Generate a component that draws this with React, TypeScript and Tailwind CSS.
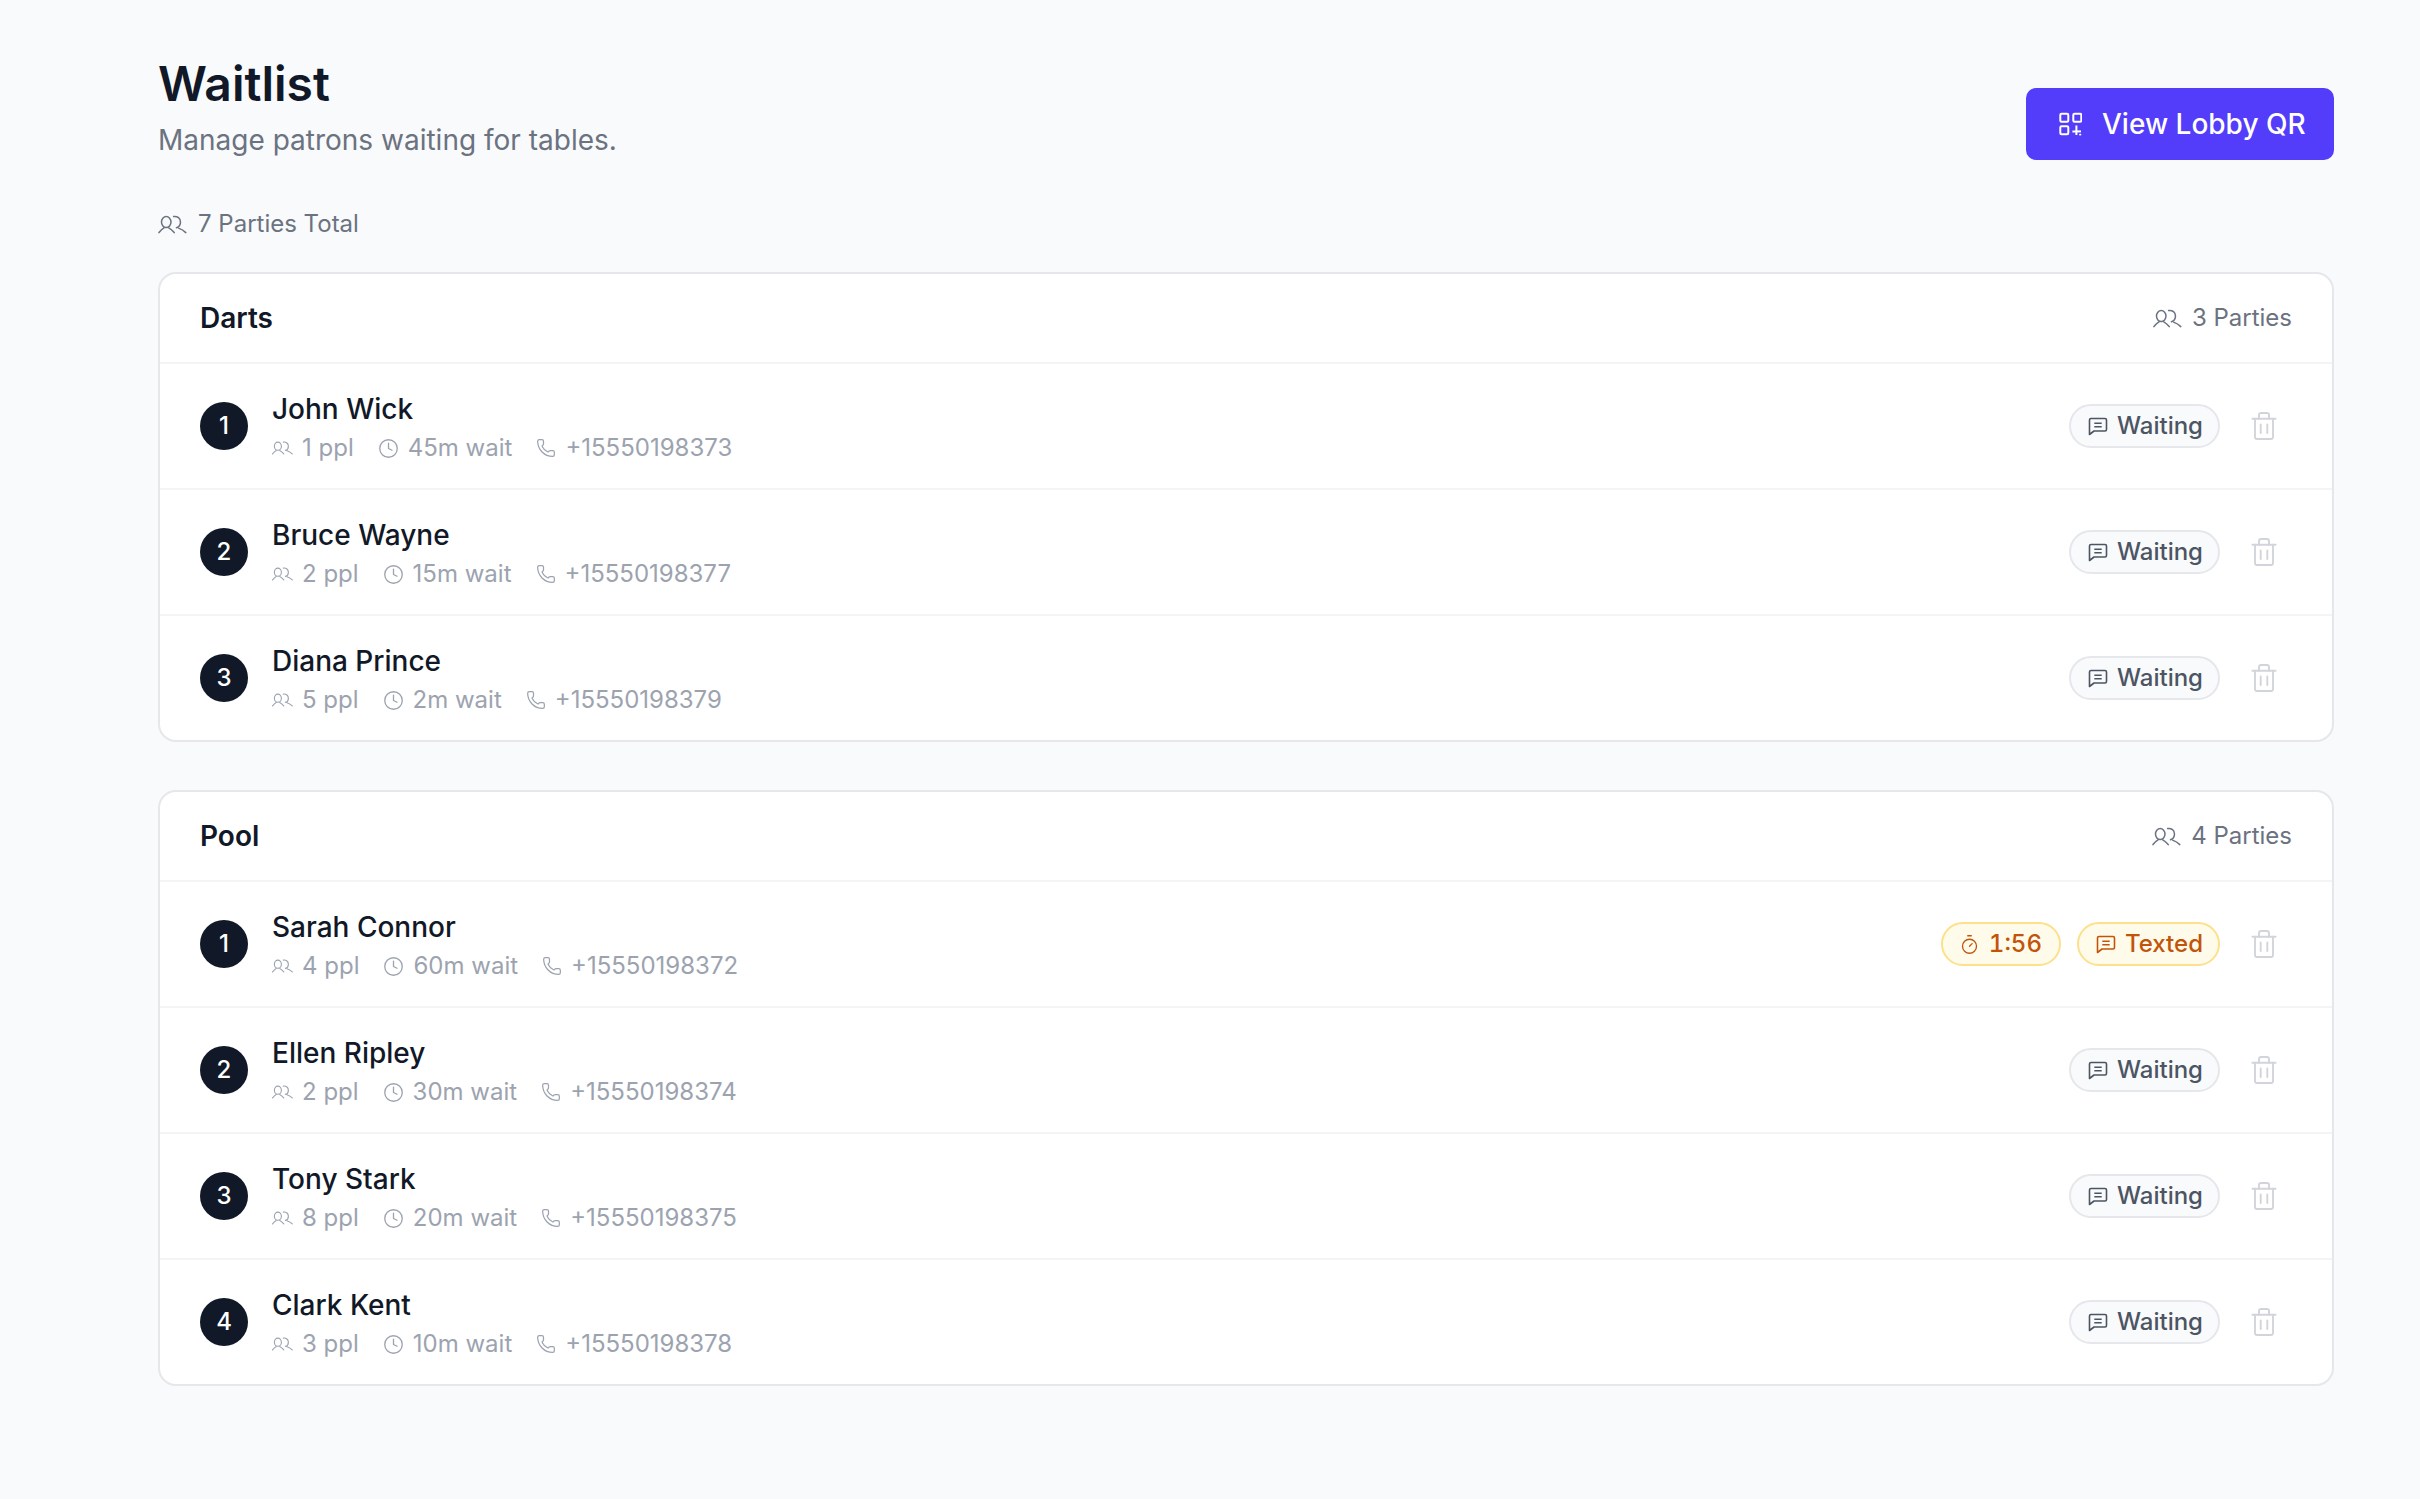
import { Clock, Phone, Timer } from "lucide-react";

type Party = {
  name: string;
  size: number;
  wait: string;
  phone: string;
  timer?: string;
};

const groups: { name: string; parties: Party[] }[] = [
  {
    name: "Darts",
    parties: [
      { name: "John Wick", size: 1, wait: "45m", phone: "+15550198373" },
      { name: "Bruce Wayne", size: 2, wait: "15m", phone: "+15550198377" },
      { name: "Diana Prince", size: 5, wait: "2m", phone: "+15550198379" },
    ],
  },
  {
    name: "Pool",
    parties: [
      { name: "Sarah Connor", size: 4, wait: "60m", phone: "+15550198372", timer: "1:56" },
      { name: "Ellen Ripley", size: 2, wait: "30m", phone: "+15550198374" },
      { name: "Tony Stark", size: 8, wait: "20m", phone: "+15550198375" },
      { name: "Clark Kent", size: 3, wait: "10m", phone: "+15550198378" },
    ],
  },
];

function UsersIcon({ className }: { className: string }) {
  return (
    <svg viewBox="4 6 30 20" fill="none" stroke="currentColor" strokeWidth="1.6" strokeLinecap="round" className={className}>
      <ellipse cx="12.4" cy="13.4" rx="5" ry="5.8" />
      <path d="M4.8 24.5C6.5 22.4 8.4 20.6 10 19.6" />
      <path d="M15 19.6C17 20.6 19 22.4 20.8 24.5" />
      <path d="M20.2 7.6C24.2 7 27.4 9.6 27.4 13.4C27.4 16.4 25.6 18.8 23.2 19.4" />
      <path d="M25.4 19.8C28 20.8 31 22.6 33 24.5" />
    </svg>
  );
}

function QrIcon() {
  return (
    <svg viewBox="8 5 24 26" fill="none" stroke="currentColor" strokeWidth="2" className="h-[26px] w-[24px]">
      <rect x="10.3" y="7.7" width="8" height="8" rx="1.2" />
      <rect x="23.3" y="7.7" width="8" height="8" rx="1.2" />
      <rect x="10.3" y="20.3" width="8" height="8" rx="1.2" />
      <path d="M22.4 25.4H26.4V19.6" />
      <path d="M26.4 25.4V29" />
      <path d="M26.4 25.4H31" />
      <path d="M30.2 27.8V29.4" />
    </svg>
  );
}

function MessageIcon() {
  return (
    <svg viewBox="7 6 20 19" fill="none" stroke="currentColor" strokeWidth="1.6" strokeLinejoin="round" className="h-[19px] w-[20px]">
      <path d="M10 7.5H24A1.5 1.5 0 0 1 25.5 9V18.5A1.5 1.5 0 0 1 24 20H13L8.5 23.5V9A1.5 1.5 0 0 1 10 7.5Z" />
      <path d="M13.3 12.3H20.7M13.3 15.7H20.7" />
    </svg>
  );
}

function TrashIcon() {
  return (
    <svg viewBox="5 4 30 32" fill="none" stroke="currentColor" strokeWidth="1.9" strokeLinecap="round" className="h-[32px] w-[30px]">
      <path d="M8.4 12.7H31.6" />
      <path d="M15 12.7V9A2 2 0 0 1 17 7H23A2 2 0 0 1 25 9V12.7" />
      <path d="M11 12.7V31A2 2 0 0 0 13 33H27A2 2 0 0 0 29 31V12.7" />
      <path d="M16.7 18.5V27M23.3 18.5V27" />
    </svg>
  );
}

function PartyRow({ party, position }: { party: Party; position: number }) {
  const texted = Boolean(party.timer);
  return (
    <div className="flex h-[126px] items-center justify-between border-t-2 border-[#f3f4f6] px-10">
      <div className="flex items-center gap-6">
        <div className="flex h-12 w-12 items-center justify-center rounded-full bg-[#111827] text-[24px] font-medium text-white">
          {position}
        </div>
        <div className="pt-1">
          <div className="text-[28px] leading-[39px] font-medium text-[#111827]">{party.name}</div>
          <div className="mt-[1px] flex items-center gap-6 text-[24px] leading-[36px] text-[#9ca3af]">
            <span className="flex items-center gap-[9px]">
              <UsersIcon className="h-[14px] w-[21px]" />
              {party.size} ppl
            </span>
            <span className="flex items-center gap-[9px]">
              <Clock className="h-[21px] w-[21px]" strokeWidth={1.5} />
              {party.wait} wait
            </span>
            <span className="flex items-center gap-[9px]">
              <Phone className="h-[20px] w-[20px]" strokeWidth={1.5} />
              {party.phone}
            </span>
          </div>
        </div>
      </div>
      <div className="flex items-center gap-[18px]">
        <div className="flex items-center gap-4">
          {party.timer && (
            <span className="flex h-[44px] items-center gap-[9px] rounded-full border-2 border-[#fde08a] bg-[#fffbeb] pr-[17px] pl-[16px] text-[24px] font-medium text-[#c2540a] tabular-nums">
              <Timer className="h-[21px] w-[21px]" strokeWidth={1.5} />
              {party.timer}
            </span>
          )}
          <span
            className={
              texted
                ? "flex h-[44px] items-center gap-[9px] rounded-full border-2 border-[#fde08a] bg-[#fffbeb] pr-[15px] pl-[17px] text-[24px] font-medium text-[#c2540a]"
                : "flex h-[44px] items-center gap-[9px] rounded-full border-2 border-[#e5e7eb] bg-[#f9fafb] pr-[15px] pl-[17px] text-[24px] font-medium text-[#4b5563]"
            }
          >
            <MessageIcon />
            {texted ? "Texted" : "Waiting"}
          </span>
        </div>
        <button type="button" className="py-[11px] pr-[13px] pl-[11px] text-[#d1d5db]">
          <TrashIcon />
        </button>
      </div>
    </div>
  );
}

export default function App() {
  return (
    <div
      className="min-h-[1499px] bg-[#f9fafb] pt-[51px] pr-[86px] pl-[158px]"
      style={{ fontFamily: "Inter, sans-serif" }}
    >
      <div className="flex items-end justify-between">
        <div>
          <h1 className="text-[48px] leading-[66px] font-semibold text-[#111827]">Waitlist</h1>
          <p className="mt-[1px] text-[28px] leading-[44px] text-[#6b7280]">Manage patrons waiting for tables.</p>
        </div>
        <button
          type="button"
          className="mb-[2px] flex h-[72px] w-[308px] items-center gap-[20px] rounded-[10px] bg-[#533cfa] pl-8 text-[28px] font-medium text-white"
        >
          <QrIcon />
          View Lobby QR
        </button>
      </div>

      <div className="mt-[44px] flex items-center gap-[11px] text-[24px] leading-[36px] text-[#6b7280]">
        <UsersIcon className="h-[19px] w-[29px]" />7 Parties Total
      </div>

      <div className="mt-[30px] flex flex-col gap-[48px]">
        {groups.map((group) => (
          <section key={group.name} className="overflow-hidden rounded-[18px] border-2 border-[#e5e7eb] bg-white">
            <div className="flex h-[88px] items-center justify-between px-10">
              <h2 className="text-[28px] font-semibold text-[#111827]">{group.name}</h2>
              <span className="flex items-center gap-[10px] text-[24px] text-[#6b7280]">
                <UsersIcon className="h-[19px] w-[29px]" />
                {group.parties.length} Parties
              </span>
            </div>
            {group.parties.map((party, i) => (
              <PartyRow key={party.name} party={party} position={i + 1} />
            ))}
          </section>
        ))}
      </div>
    </div>
  );
}
